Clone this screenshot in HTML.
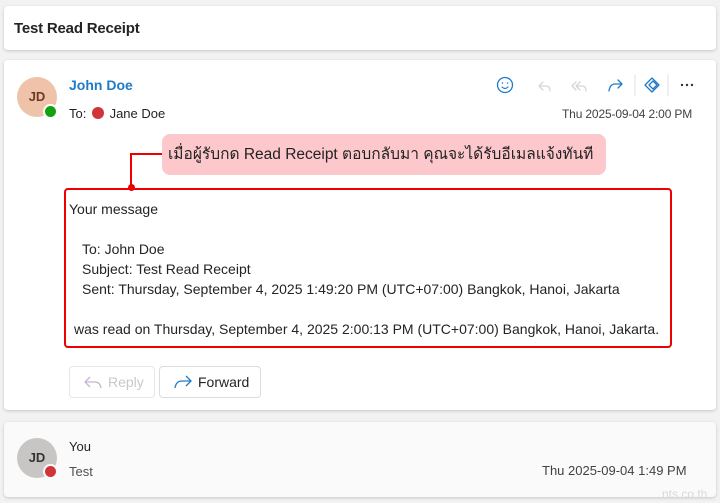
<!DOCTYPE html>
<html><head><meta charset="utf-8"><style>
*{box-sizing:border-box;margin:0;padding:0}
body{width:720px;height:503px;background:#f2f2f2;font-family:"Liberation Sans","Noto Sans CJK SC",sans-serif;position:relative;overflow:hidden;color:#242424}
.card{position:absolute;background:#fff;border-radius:4px;box-shadow:0 1px 3px rgba(0,0,0,.18)}
.abs{position:absolute;white-space:nowrap}
</style></head><body>
<div class="card" style="left:4px;top:6px;width:712px;height:44px">
 <div class="abs" style="left:10px;top:14px;font-size:15px;font-weight:bold;color:#242424;letter-spacing:-0.2px">Test Read Receipt</div>
</div>
<div class="card" style="left:4px;top:60px;width:712px;height:350px">
 <div class="abs" style="left:13px;top:17px;width:40px;height:40px;border-radius:50%;background:#eec3aa;color:#6b3a22;font-size:13px;font-weight:bold;text-align:center;line-height:40px">JD</div>
 <div class="abs" style="left:39px;top:44px;width:15px;height:15px;border-radius:50%;background:#13a10e;border:2px solid #fff"></div>
 <div class="abs" style="left:65px;top:17px;font-size:14px;font-weight:bold;color:#1f7bc8">John Doe</div>
 <div class="abs" style="left:65px;top:46px;font-size:13px">To: <span style="display:inline-block;width:12px;height:12px;border-radius:50%;background:#d13438;vertical-align:-1px;margin:0 2px"></span> Jane Doe</div>
 <svg class="abs" style="left:490px;top:14px" width="210" height="24" viewBox="0 0 210 24" fill="none" stroke-linecap="round" stroke-linejoin="round">
  <circle cx="11" cy="11" r="7.5" stroke="#1f7bc8" stroke-width="1.3"/><circle cx="8.5" cy="9" r=".8" fill="#1f7bc8"/><circle cx="13.5" cy="9" r=".8" fill="#1f7bc8"/><path d="M8 13q3 3 6 0" stroke="#1f7bc8" stroke-width="1.2"/>
  <path d="M49 8l-4 4 4 4M45 12h7q4 0 4 5" stroke="#d6d6d6" stroke-width="1.3"/>
  <path d="M82 8l-4 4 4 4M86 8l-4 4 4 4M82 12h6q4 0 4 5" stroke="#d6d6d6" stroke-width="1.3"/>
  <path d="M124 6l4 4-4 4M128 10h-7q-5 0-6 7" stroke="#1f7bc8" stroke-width="1.3"/>
  <line x1="141" y1="1" x2="141" y2="22" stroke="#e1e1e1"/>
  <path d="M158 4l7 7-7 7-7-7z" stroke="#1f7bc8" stroke-width="1.3"/><path d="M155 11l4-4 4 4-4 4z" stroke="#1f7bc8" stroke-width="1.3"/>
  <line x1="174" y1="1" x2="174" y2="22" stroke="#e1e1e1"/>
  <circle cx="188" cy="11" r="1.2" fill="#333"/><circle cx="193" cy="11" r="1.2" fill="#333"/><circle cx="198" cy="11" r="1.2" fill="#333"/>
 </svg>
 <div class="abs" style="left:558px;top:47px;font-size:12px;color:#424242;letter-spacing:-0.15px">Thu 2025-09-04 2:00 PM</div>
 <div class="abs" style="left:158px;top:74px;width:444px;height:41px;background:#fdc8cc;border-radius:8px;font-size:15.5px;line-height:41px;padding-left:6px;color:#222;overflow:hidden">เมื่อผู้รับกด Read Receipt ตอบกลับมา คุณจะได้รับอีเมลแจ้งทันที</div>
 <div class="abs" style="left:126px;top:93px;width:32px;height:36px;border-left:2px solid #e00;border-top:2px solid #e00"></div>
 <div class="abs" style="left:124px;top:124px;width:7px;height:7px;border-radius:50%;background:#e00"></div>
 <div class="abs" style="left:60px;top:128px;width:608px;height:160px;border:2px solid #e00;border-radius:4px;font-size:14px;line-height:20px;color:#242424;padding:9px 0 0 3px">
  Your message<br><br>
  <div style="padding-left:13px">To: John Doe<br>Subject: Test Read Receipt<br>Sent: Thursday, September 4, 2025 1:49:20 PM (UTC+07:00) Bangkok, Hanoi, Jakarta</div><br>
  <div style="padding-left:5px">was read on Thursday, September 4, 2025 2:00:13 PM (UTC+07:00) Bangkok, Hanoi, Jakarta.</div>
 </div>
 <div class="abs" style="left:65px;top:306px;width:86px;height:32px;border:1px solid #e6e6e6;border-radius:4px;font-size:14px;color:#c8c8c8;line-height:30px;padding-left:38px">Reply
  <svg style="position:absolute;left:14px;top:8px" width="18" height="14" fill="none" stroke="#c8b4d4" stroke-width="1.3"><path d="M6 2L1 7l5 5M1 7h10q5 0 6 6"/></svg></div>
 <div class="abs" style="left:155px;top:306px;width:102px;height:32px;border:1px solid #dcdcdc;border-radius:4px;font-size:14px;color:#242424;line-height:30px;padding-left:38px">Forward
  <svg style="position:absolute;left:13px;top:8px" width="20" height="14" fill="none" stroke="#1f7bc8" stroke-width="1.3"><path d="M13 1l5 5-5 5M18 6H9Q3 6 2 13"/></svg></div>
</div>
<div class="card" style="left:4px;top:422px;width:712px;height:75px;background:#fafafa">
 <div class="abs" style="left:13px;top:16px;width:40px;height:40px;border-radius:50%;background:#c8c6c4;color:#333;font-size:13px;font-weight:bold;text-align:center;line-height:40px">JD</div>
 <div class="abs" style="left:39px;top:42px;width:15px;height:15px;border-radius:50%;background:#d13438;border:2px solid #fafafa"></div>
 <div class="abs" style="left:65px;top:17px;font-size:13px">You</div>
 <div class="abs" style="left:65px;top:42px;font-size:13px;color:#505050">Test</div>
 <div class="abs" style="left:538px;top:41px;font-size:13px;color:#424242">Thu 2025-09-04 1:49 PM</div>
</div>
<div class="abs" style="left:662px;top:487px;font-size:12px;color:#d8d8d8">nts.co.th</div>
</body></html>
